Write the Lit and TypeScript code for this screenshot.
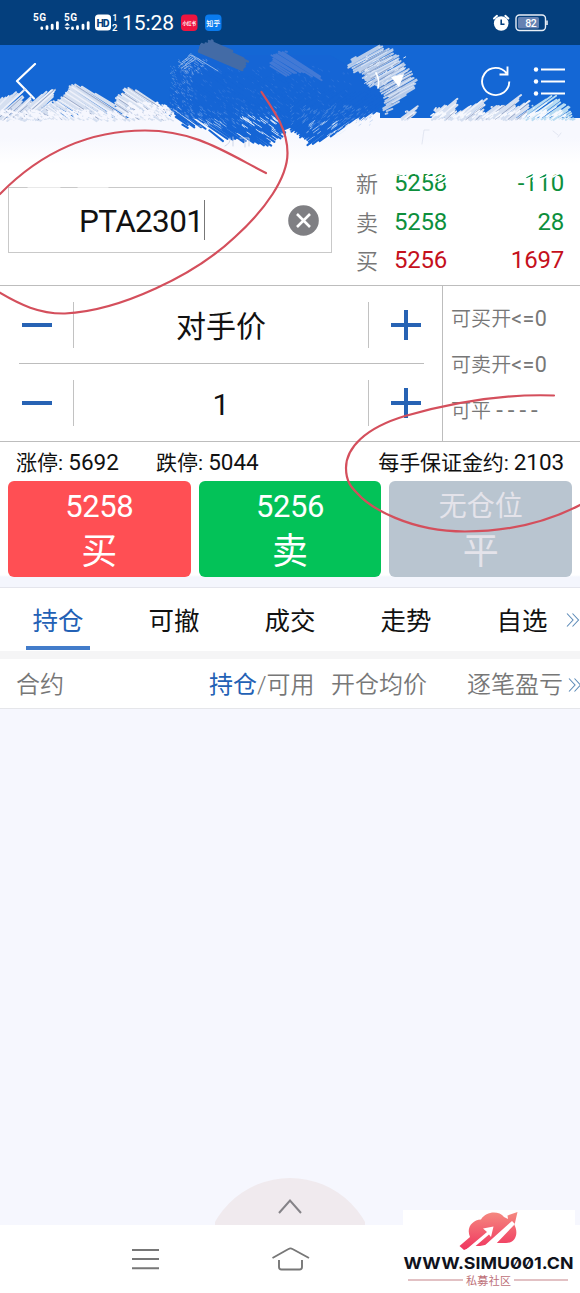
import { LitElement, html, css, svg } from "lit";
import { customElement } from "lit/decorators.js";

type Pt = [number, number];

function rng(seed: number) {
  let s = seed;
  return () => {
    s = (s * 1664525 + 1013904223) % 4294967296;
    return s / 4294967296;
  };
}

/** Fills a polygon with parallel, ragged-ended strokes and returns the path data. */
function hatch(poly: Pt[], deg: number, step: number, rag: number, seed: number, density = 1): string {
  const rand = rng(seed);
  const a = (deg * Math.PI) / 180;
  const c = Math.cos(a);
  const s = Math.sin(a);
  const r = poly.map(([x, y]) => [x * c + y * s, -x * s + y * c] as Pt);
  const ys = r.map((p) => p[1]);
  const out: string[] = [];
  for (let y = Math.min(...ys); y < Math.max(...ys); y += step * (0.7 + rand() * 0.6)) {
    const xs: number[] = [];
    r.forEach((p, i) => {
      const q = r[(i + 1) % r.length];
      if (p[1] > y !== q[1] > y) xs.push(p[0] + ((y - p[1]) / (q[1] - p[1])) * (q[0] - p[0]));
    });
    xs.sort((m, n) => m - n);
    for (let i = 0; i + 1 < xs.length; i += 2) {
      if (rand() > density) continue;
      const x1 = xs[i] - (rand() - 0.4) * rag;
      const x2 = xs[i + 1] + (rand() - 0.4) * rag;
      const y2 = y + (rand() - 0.5) * 2;
      out.push(
        `M${(x1 * c - y * s).toFixed(1)} ${(x1 * s + y * c).toFixed(1)}L${(x2 * c - y2 * s).toFixed(1)} ${(x2 * s + y2 * c).toFixed(1)}`
      );
    }
  }
  return out.join("");
}

/** Scatters short strokes inside a box. */
function specks(x: number, y: number, w: number, h: number, n: number, deg: number, len: number, seed: number): string {
  const rand = rng(seed);
  const a = (deg * Math.PI) / 180;
  let d = "";
  for (let i = 0; i < n; i++) {
    const px = x + rand() * w;
    const py = y + rand() * h;
    const l = len * (0.3 + rand());
    d += `M${px.toFixed(1)} ${py.toFixed(1)}l${(l * Math.cos(a)).toFixed(1)} ${(l * Math.sin(a)).toFixed(1)}`;
  }
  return d;
}

const pale: [Pt[], number][] = [
  [[[-4, 119], [-4, 102], [10, 96], [24, 91], [19, 104], [30, 98], [40, 119]], -42],
  [[[22, 119], [30, 103], [42, 94], [55, 89], [50, 102], [46, 119]], -42],
  [[[36, 119], [50, 104], [62, 100], [70, 88], [78, 85], [92, 92], [108, 100], [116, 108], [118, 97], [130, 88], [146, 95], [158, 104], [176, 111], [188, 119]], 33],
  [[[398, 119], [406, 112], [416, 107], [411, 119]], -38],
  [[[432, 119], [436, 109], [446, 107], [456, 101], [456, 112], [462, 110], [486, 99], [480, 119]], -38],
  [[[478, 119], [492, 107], [506, 105], [519, 96], [514, 108], [530, 101], [525, 119]], -38],
];

@customElement("app-brush")
export class AppBrush extends LitElement {
  static styles = css`
    :host { display: block; }
    svg { display: block; width: 580px; height: 240px; overflow: hidden; fill: none; stroke-linecap: round; }
  `;
  render() {
    return html`<svg viewBox="0 0 580 240">
      <path d="M0 118H186L176 108L190 98H330L380 113V118H580V124H0Z" fill="#f7f8fe" />
      ${pale.map(
        ([p, deg], i) => svg`
          <path d=${hatch(p, deg, 1.8, 5, 11 + i * 7)} stroke="#d5dff0" stroke-width="2" />
          <path d=${hatch(p, deg, 4.2, 1, 5 + i * 3, 0.8)} stroke="#eef1fa" stroke-width="1.5" />
          <path d=${hatch(p, deg, 6.5, -3, 15 + i * 3, 0.6)} stroke="#7f8fb5" stroke-width="0.7" />`
      )}
      <path d=${hatch([[524, 119], [532, 106], [545, 99], [556, 96], [560, 103], [566, 106], [575, 119]], -35, 2, 4, 77)} stroke="#b9dcf2" stroke-width="1.8" />
      <path d=${hatch([[524, 119], [534, 108], [550, 102], [572, 119]], -35, 4, 3, 78)} stroke="#eef5fb" stroke-width="1.2" />
      <path d=${specks(0, 110, 178, 8, 230, 30, 3, 3)} stroke="#f6f7fe" stroke-width="1.8" />
      <path d=${specks(128, 102, 40, 14, 90, 30, 2.5, 9)} stroke="#f6f7fe" stroke-width="1.8" />
      <path d=${specks(4, 106, 165, 9, 60, 30, 1.5, 8)} stroke="#93a7cf" stroke-width="0.7" opacity="0.6" />
      <path d=${specks(430, 113, 136, 5, 70, -36, 5, 4)} stroke="#f7f9fe" stroke-width="1.5" />

      <path d="M174 100L178 70L200 55H330L372 80L386 100L372 113L350 121L330 133L306 138L290 128L266 138L236 133L212 122L186 117Z" fill="#1565d5" />
      <path d=${hatch([[168, 106], [180, 70], [290, 80], [284, 133], [266, 145], [238, 139], [222, 141], [206, 127], [184, 126]], 35, 2.1, 7, 21)} stroke="#1565d5" stroke-width="2" />
      <path d=${hatch([[285, 90], [385, 95], [376, 113], [352, 122], [334, 134], [312, 144], [296, 136]], -36, 2.1, 8, 22)} stroke="#1565d5" stroke-width="2" />
      <path d=${specks(170, 66, 22, 48, 150, 35, 1.2, 31)} stroke="#7ba5e4" stroke-width="0.7" opacity="0.65" />
      <path d=${specks(178, 58, 28, 16, 70, 35, 1.4, 39)} stroke="#8eb2e8" stroke-width="0.8" opacity="0.8" />
      <path d=${specks(184, 106, 96, 20, 90, 35, 3, 32)} stroke="#8fb6ec" stroke-width="0.7" opacity="0.55" />
      <path d=${specks(238, 114, 38, 20, 34, 35, 7, 33)} stroke="#e8f0fc" stroke-width="1" opacity="0.85" />
      <path d=${specks(198, 118, 22, 10, 14, 35, 6, 37)} stroke="#dfeafa" stroke-width="0.9" opacity="0.7" />
      <path d=${specks(290, 106, 80, 20, 120, -36, 3, 34)} stroke="#7fa8e6" stroke-width="0.7" opacity="0.5" />
      <path d=${specks(304, 124, 38, 12, 24, -36, 6, 38)} stroke="#e3edfb" stroke-width="0.9" opacity="0.7" />
      <path d=${specks(180, 66, 170, 55, 260, 35, 2, 35)} stroke="#4682de" stroke-width="0.8" opacity="0.5" />
      <path d=${hatch([[178, 66], [190, 55], [195, 58], [186, 68]], -35, 2.4, 3, 41)} stroke="#9cbbe9" stroke-width="0.9" />
      <path d="M182 62L191 55L203 64M192 55L218 71M186 64L193 58" stroke="#c3d4f0" stroke-width="1" opacity="0.7" />
      <path d=${hatch([[198, 52], [203, 44], [212, 41], [230, 50], [247, 60], [241, 71], [222, 64]], 24, 1.8, 3, 43)} stroke="#436ba6" stroke-width="2.4" />
      <path d=${hatch([[272, 68], [273, 55], [285, 51], [300, 61], [318, 72], [320, 79], [300, 72], [284, 77]], 32, 2, 4, 44)} stroke="#4279d5" stroke-width="1.8" />

      <path d=${hatch([[348, 67], [354, 58], [378, 45], [391, 50], [399, 57], [401, 65], [411, 72], [416, 87], [400, 101], [384, 115], [388, 98], [380, 88], [366, 82], [362, 73]], -29, 1.9, 6, 51)} stroke="#b7cbe9" stroke-width="1.9" />
      <path d=${hatch([[356, 62], [380, 47], [396, 59], [412, 76], [414, 88], [392, 104], [384, 86]], -29, 4.4, 2, 52)} stroke="#d6e1f3" stroke-width="1.2" />
      <path d=${hatch([[352, 64], [380, 46], [412, 76], [392, 104], [380, 86]], -29, 6, 0, 53)} stroke="#7087b4" stroke-width="0.6" />
      <path d=${specks(362, 56, 42, 34, 60, -29, 3, 54)} stroke="#dfe8f6" stroke-width="1" />
      <path d="M376 73q4 7 2 15" stroke="#fff" stroke-width="1.6" />
      <path d="M391 77L404 74L399 87Z" fill="#fff" />
      <path d=${hatch([[334, 132], [360, 118], [376, 117], [352, 124]], -36, 3.4, 4, 55)} stroke="#e9f0fb" stroke-width="1.2" />

      <g stroke="#c5cee2" stroke-width="1" opacity="0.8">
        <path d="M225 146q6-3 5-8M233 137v9M240 138h9v8M245 139v8" />
        <path d="M422 144l2-14h5M553 131l5 4M558 137l3-4" opacity="0.5" />
      </g>
      <path d=${hatch([[414, 172], [452, 170], [450, 187], [440, 182], [424, 177]], -32, 3.6, 4, 61)} stroke="#fff" stroke-width="1.5" />
      <path d="M392 176L412 173M400 178L406 174" stroke="#fff" stroke-width="1.3" />
      <path d=${hatch([[512, 176], [526, 172], [566, 170], [566, 174], [532, 181], [514, 181]], -32, 4, 3, 62)} stroke="#fff" stroke-width="1.5" />
      <path d="M28 187.500H60M78 187.500H108" stroke="#fff" stroke-width="1.2" opacity="0.6" />
    </svg>`;
  }
}

@customElement("app-root")
export class AppRoot extends LitElement {
  static styles = css`
    * { box-sizing: border-box; }
    :host {
      display: flex; flex-direction: column; position: relative; width: 580px; height: 1293px; overflow: hidden;
      background: #fff; color: #111; font-family: Roboto, "Noto Sans CJK SC", sans-serif; white-space: nowrap;
    }
    svg { display: block; fill: none; }
    i { font-style: normal; font-weight: 400; }
    .status { height: 45px; background: #043f7d; display: flex; justify-content: space-between; padding: 0 32px 0 33px; }
    .header { height: 73px; background: #1467d5; display: flex; align-items: center; padding: 0 15px; }
    .header .gap { flex: 1; }
    .header .refresh { margin-right: 22px; }
    .quote { height: 168px; border-bottom: 1px solid #bdbdbd; display: flex; background: linear-gradient(#f7f8fe 0 20px, #fff 46px); }
    .code { margin: 69px 0 0 8px; width: 324px; height: 66px; border: 1px solid #c9c9c9; display: flex; align-items: center; padding: 0 12px 0 70px; }
    .code .name { font-size: 31.500px; letter-spacing: -0.65px; line-height: 64px; padding-top: 4px; }
    .caret { width: 1px; height: 40px; background: #777; margin-left: 1px; }
    .code svg { margin-left: auto; }
    .prices { margin: 46px 16px 0 24px; flex: 1; display: grid; grid-template-columns: 38px 1fr auto; grid-auto-rows: 38.500px; line-height: 39px; font-size: 24px; letter-spacing: -0.2px; }
    .prices .k { color: #777; font-size: 22px; font-weight: 350; padding-top: 1px; }
    .prices .v { text-align: right; }
    .g { color: #0d8f3c; }
    .r { color: #c5101c; }
    .controls { height: 156px; border-bottom: 1px solid #bdbdbd; display: flex; }
    .steps { width: 443px; border-right: 1px solid #bdbdbd; padding-left: 19px; }
    .step { height: 77px; width: 405px; display: flex; align-items: center; }
    .step + .step { border-top: 1px solid #bdbdbd; height: 78px; }
    .step .val { flex: 1; text-align: center; height: 46px; border: solid #c2c2c2; border-width: 0 1px; font-size: 30px; line-height: 49px; }
    .step .pm { width: 54px; }
    .step .pm.plus { width: 55px; padding-left: 22px; }
    .step .pm svg { margin-left: 3px; }
    .step .pm.plus svg { margin-left: 0; }
    .avail { padding: 10px 0 0 8px; color: #777; font-size: 20px; font-weight: 350; line-height: 46px; letter-spacing: 0.1px; }
    .avail i { font-size: 21.500px; letter-spacing: 0.3px; }
    .avail .dash { letter-spacing: 5px; font-size: 24px; line-height: 20px; }
    .limits { height: 39px; display: flex; font-size: 21px; line-height: 41px; padding: 0 16px; }
    .limits .b { margin-left: 37px; }
    .limits .c { margin-left: auto; letter-spacing: -0.1px; }
    .limits i { font-size: 22.500px; }
    .actions { height: 107px; display: grid; grid-template-columns: repeat(3, 1fr); gap: 8px; padding: 0 8px; background: linear-gradient(#fff 94px, #f4f6fd 96px); border-bottom: 1px solid #e4e5ec; }
    .btn { height: 96px; border-radius: 6px; color: #fff; text-align: center; display: flex; flex-direction: column; }
    .btn .p { font-size: 31px; line-height: 36px; padding-top: 8px; height: 47px; letter-spacing: -0.4px; }
    .btn .t { font-size: 36px; line-height: 48px; }
    .buy { background: #ff4f54; }
    .sell { background: #03c258; }
    .flat { background: #b9c5d0; color: #e4e3ea; }
    .flat .p { font-size: 28px; letter-spacing: 0; }
    .tabs { height: 63px; display: grid; grid-template-columns: repeat(5, 116px); font-size: 25.500px; line-height: 67px; text-align: center; position: relative; }
    .tabs .on { color: #2361b5; display: flex; flex-direction: column; align-items: center; }
    .tabs .on::after { content: ""; width: 64px; height: 4px; background: #427cca; margin-top: -9px; }
    .more { position: absolute; right: 0; top: 24px; }
    .cols { height: 58px; border-top: 8px solid #f5f5f6; border-bottom: 1px solid #e5e6ea; display: grid; grid-template-columns: 193px 122px 136px 1fr; padding-left: 16px; font-size: 24px; line-height: 52px; color: #777; font-weight: 350; position: relative; }
    .cols b { font-weight: 400; color: #2361b5; }
    .cols .more { top: 18px; right: -2px; }
    .body { flex: 1; background: #f6f7fe; display: flex; justify-content: center; align-items: flex-end; }
    .nav { height: 68px; background: #fff; display: flex; padding: 20px 0 0 131px; gap: 113px; }
    .brush { position: absolute; left: 0; top: 0; }
    .ink { position: absolute; left: 0; top: 0; }
    .mark { position: absolute; left: 403px; top: 1210px; background: #fff; }
  `;

  private chevrons() {
    return html`<svg class="more" width="14" height="16" viewBox="0 0 14 16" stroke="#5d8bb8" stroke-width="1.1"><path d="M1 1.500L7 8L1 14.500M6.500 1.500L12.500 8L6.500 14.500" /></svg>`;
  }

  private step(value: string) {
    return html`<div class="step">
      <div class="pm"><svg width="30" height="4"><path d="M0 2H30" stroke="#2763b4" stroke-width="4" /></svg></div>
      <div class="val">${value}</div>
      <div class="pm plus"><svg width="30" height="30"><path d="M0 15H30M15 0V30" stroke="#2763b4" stroke-width="4" /></svg></div>
    </div>`;
  }

  render() {
    return html`
      <div class="status">
        <svg width="200" height="45" viewBox="33 0 200 45" fill="#fff" font-family="Roboto">
          <text x="33" y="21" font-size="10" font-weight="700" fill="#fff" textLength="13">5G</text>
          <text x="64" y="21" font-size="10" font-weight="700" fill="#fff" textLength="13">5G</text>
          <g stroke="#fff" stroke-width="2.800" stroke-linecap="round">
            <path d="M41.800 28.600v-.6M47 28.600v-2M52.200 28.600v-3.500M57.400 28.600v-6M72.500 28.600v-.6M77.500 28.600v-2M83 28.600v-3.500M88.200 28.600v-6" />
          </g>
          <path d="M64.500 25.500L67.200 22.800L70 25.500ZM64.500 27.200L67.200 30L70 27.200Z" fill="#fff" />
          <rect x="95" y="14.500" width="16" height="16" rx="3.500" fill="#fff" />
          <text x="96.500" y="26.500" font-size="10.500" font-weight="800" fill="#043f7d" textLength="13">HD</text>
          <text x="112.500" y="20.500" font-size="8.500" font-weight="600" fill="#fff">1</text>
          <text x="112" y="30.500" font-size="9.500" font-weight="600" fill="#fff">2</text>
          <text x="122" y="30" font-size="21" font-weight="400" fill="#fff" textLength="52">15:28</text>
          <rect x="181" y="14.500" width="16.500" height="16.500" rx="4" fill="#ef143f" />
          <text x="182.500" y="24.800" font-size="5" font-weight="700" fill="#fff" font-family="Noto Sans CJK SC" textLength="13.500" lengthAdjust="spacingAndGlyphs">小红书</text>
          <rect x="205" y="14.500" width="16.500" height="16.500" rx="4" fill="#0a7bee" />
          <text x="206.300" y="25.500" font-size="7" font-weight="500" fill="#fff" font-family="Noto Sans CJK SC" textLength="14">知乎</text>
        </svg>
        <svg width="56" height="45" viewBox="492 0 56 45">
          <circle cx="501.200" cy="23.500" r="7.300" fill="#fff" />
          <path d="M494 18.500L497 15.800M508.300 18.500L505.300 15.800" stroke="#fff" stroke-width="2" stroke-linecap="round" />
          <path d="M501.200 19.500V24.200H504.500" stroke="#043f7d" stroke-width="1.600" />
          <rect x="516" y="15" width="29.500" height="15.500" rx="3.500" stroke="#e8eef6" stroke-width="1.400" />
          <rect x="518" y="17" width="21" height="11.500" rx="1.500" fill="#6682b2" />
          <path d="M547 20.500V25" stroke="#e8eef6" stroke-width="1.600" />
          <text x="525.300" y="26.700" font-size="10.500" font-weight="500" fill="#fff" font-family="Roboto" textLength="11.500">82</text>
        </svg>
      </div>
      <div class="header">
        <svg width="22" height="38" viewBox="0 0 22 38"><path d="M20 1L2 18L19 35.500" stroke="#fff" stroke-width="2.200" stroke-linejoin="round" stroke-linecap="round" /></svg>
        <div class="gap"></div>
        <svg class="refresh" width="30" height="32" viewBox="0 0 30 32" stroke="#fff" stroke-width="1.900"><path d="M28.300 15.500A13.600 13.600 0 1 1 25.500 7.200M26.500 0.500V8.500H18.500" /></svg>
        <svg width="32" height="30" viewBox="0 0 32 30" stroke="#fff" stroke-width="2.200"><path d="M8 2.500H32M8 14.500H32M8 26.500H32" /><g fill="#fff" stroke="none"><circle cx="3" cy="2.500" r="2.200" /><circle cx="3" cy="14.500" r="2.200" /><circle cx="3" cy="26.500" r="2.200" /></g></svg>
      </div>
      <div class="quote">
        <div class="code">
          <span class="name">PTA2301</span><span class="caret"></span>
          <svg width="31" height="31" viewBox="0 0 31 31"><circle cx="15.500" cy="15.500" r="15.300" fill="#7f7f83" /><path d="M9 9L22 22M22 9L9 22" stroke="#fff" stroke-width="2.600" /></svg>
        </div>
        <div class="prices">
          <span class="k">新</span><span class="g">5258</span><span class="v g">-110</span>
          <span class="k">卖</span><span class="g">5258</span><span class="v g">28</span>
          <span class="k">买</span><span class="r">5256</span><span class="v r">1697</span>
        </div>
      </div>
      <div class="controls">
        <div class="steps">${this.step("对手价")}${this.step("1")}</div>
        <div class="avail"><div>可买开<i>&lt;=0</i></div><div>可卖开<i>&lt;=0</i></div><div>可平 <i class="dash">----</i></div></div>
      </div>
      <div class="limits">
        <span>涨停: <i>5692</i></span><span class="b">跌停: <i>5044</i></span><span class="c">每手保证金约: <i>2103</i></span>
      </div>
      <div class="actions">
        <div class="btn buy"><span class="p">5258</span><span class="t">买</span></div>
        <div class="btn sell"><span class="p">5256</span><span class="t">卖</span></div>
        <div class="btn flat"><span class="p">无仓位</span><span class="t">平</span></div>
      </div>
      <div class="tabs">
        <span class="on">持仓</span><span>可撤</span><span>成交</span><span>走势</span><span>自选</span>
        ${this.chevrons()}
      </div>
      <div class="cols">
        <span>合约</span><span><b>持仓</b>/可用</span><span>开仓均价</span><span>逐笔盈亏</span>
        ${this.chevrons()}
      </div>
      <div class="body">
        <svg width="150" height="47" viewBox="0 0 150 47"><ellipse cx="75" cy="86" rx="86" ry="86" fill="#f0eaee" /><path d="M64 35L75 22.500L86 35" stroke="#858388" stroke-width="2" /></svg>
      </div>
      <div class="nav">
        <svg width="28" height="28" viewBox="0 0 28 28" stroke="#777" stroke-width="2"><path d="M1 5H28M1 14H28M1 23.300H28" /></svg>
        <svg width="38" height="28" viewBox="0 0 38 28" stroke="#777" stroke-width="1.900" stroke-linejoin="round"><path d="M0.500 13L16.500 4Q18.500 2.800 20.500 4L37 13M7 15V22Q7 24.500 9.500 24.500H27.500Q30 24.500 30 22V15" /></svg>
      </div>
      <app-brush class="brush"></app-brush>
      <svg class="ink" width="580" height="560" viewBox="0 0 580 560" stroke="#d44f5c" stroke-width="2.200" stroke-linecap="round">
        <path d="M266 173C225 152 195 130.500 145 130.500C95 130.500 45 148 0 194M-3 291C20 305 40 314 65 313.500C120 311 195 275 235 237C265 210 287.500 178 287.500 153C287.500 130 275 112 261.500 92" />
        <path d="M554 395.500C500 393.500 447 404 405 416C365 428 346 448 346 468C346 482 352 488 357 493C370 508 410 531.500 465 531.500C510 531.500 550 521 582 504" />
      </svg>
      <svg class="mark" width="172" height="83" viewBox="403 1210 172 83">
        <defs><linearGradient id="lg" x1="0" y1="0" x2="0" y2="1"><stop offset="0" stop-color="#f58a80" /><stop offset="1" stop-color="#f0355f" /></linearGradient></defs>
        <path d="M459.500 1246L470 1237C466 1228 472 1220 481 1219.500C486 1211 499 1210.500 504 1217L508 1219L507.500 1215.500L517.500 1212L514.500 1225C519 1234 515 1243 506 1243H495L480 1246H474L464 1250Z" fill="url(#lg)" />
        <path d="M465 1250.500L487 1232L483 1228.500L493.500 1226.500L491 1237L489 1234.500L475 1246.500ZM483 1247L512 1221L515 1224L493 1247Z" fill="#fff" />
        <text x="403.500" y="1269" font-size="16.500" font-weight="700" font-family="Inter" fill="#10121c" textLength="170" lengthAdjust="spacingAndGlyphs" style="font-feature-settings:'zero'">WWW.SIMU001.CN</text>
        <path d="M408 1280H463M514 1280H568" stroke="#c58389" stroke-width="1.200" />
        <text x="466" y="1284.500" font-size="11" font-family="Noto Sans CJK SC" fill="#bd7078" textLength="45">私募社区</text>
      </svg>
    `;
  }
}
